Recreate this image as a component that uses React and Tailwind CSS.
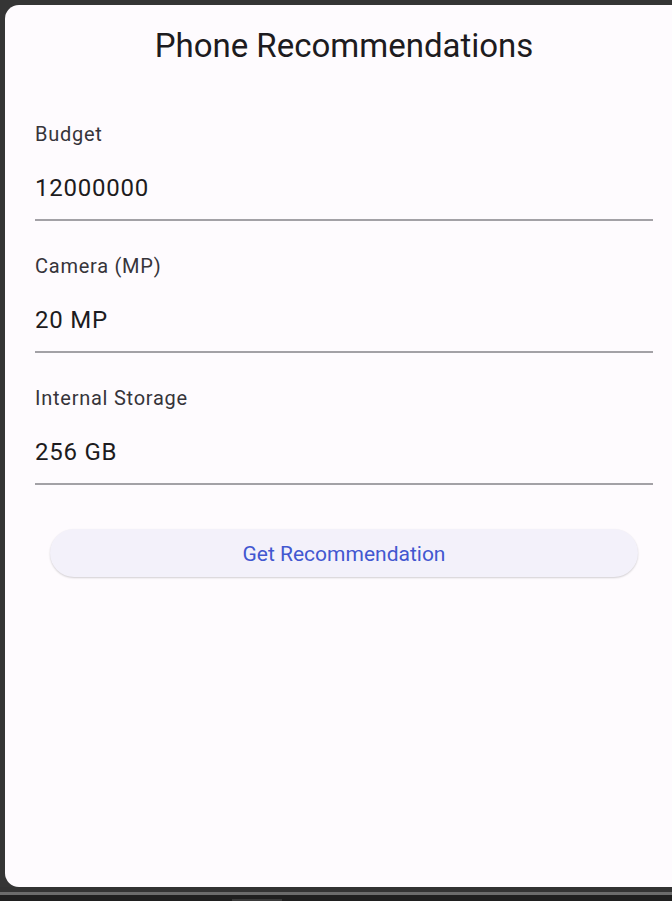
import React from 'react'

const fields = [
    {label: 'Budget', value: '12000000'},
    {label: 'Camera (MP)', value: '20 MP'},
    {label: 'Internal Storage', value: '256 GB'},
]

function Field({label, value}) {
    return (
        <div className="flex flex-col">
            <div className="h-[24px] text-[20px] leading-[24px] tracking-[0.75px] text-[#36343a]">{label}</div>
            <div className="mt-[28px] h-[28px] text-[24px] leading-[28px] tracking-[0.75px] text-[#1d1b20]">{value}</div>
            <div className="mt-[17px] h-[2px] bg-[#a3a1a6]" />
        </div>
    )
}

export default function App() {
    return (
        <main className="flex h-[901px] w-[672px] flex-col overflow-hidden bg-[#353535] font-['Roboto',sans-serif]">
            <div className="flex h-[887px] shrink-0 pt-[5px] pl-[5px]">
                <section className="flex h-[882px] w-[678px] shrink-0 flex-col rounded-l-[14px] bg-[#fefbfe] px-[30px]">
                    <h1 className="mt-[20px] text-center text-[33px] leading-[42px] font-normal text-[#1d1b20]">
                        Phone Recommendations
                    </h1>
                    <div className="mt-[55px] flex flex-col gap-[33px]">
                        {fields.map((f) => (
                            <Field key={f.label} label={f.label} value={f.value} />
                        ))}
                    </div>
                    <div className="mt-[44px] px-[15px]">
                        <button className="flex h-[48px] w-full items-center justify-center rounded-full bg-[#f3f1fa] pt-[3px] text-[21px] text-[#4257d0] shadow-[0_1px_2px_rgba(0,0,0,0.18)]">
                            Get Recommendation
                        </button>
                    </div>
                </section>
            </div>
            <div className="h-[5px] shrink-0 bg-[#333333]" />
            <div className="h-[3px] shrink-0 bg-[#6b6b6b]" />
            <div className="flex flex-1 items-end bg-[#1f1f1f] pl-[232px]">
                <div className="h-[2px] w-[50px] bg-[#3a3a3a]" />
            </div>
        </main>
    )
}
